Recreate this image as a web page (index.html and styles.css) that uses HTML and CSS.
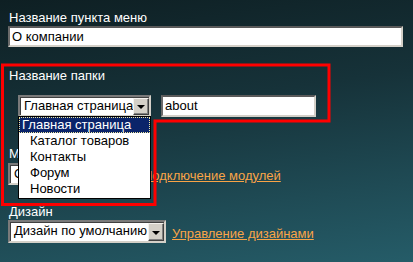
FILE: index.html
```html
<!DOCTYPE html>
<html lang="ru">
<head>
<meta charset="utf-8">
<link rel="stylesheet" href="styles.css">
</head>
<body>
<div class="page">
  <div class="label">Название пункта меню</div>
  <div class="input wide">О компании</div>

  <div class="label folder-label">Название папки</div>
  <div class="row folder-row">
    <div class="select folder-select"><span class="sel-text">Главная страница</span><span class="btn"><span class="tri"></span></span></div>
    <div class="input about">about</div>
  </div>

  <div class="label modules-label">Модули</div>
  <div class="row">
    <div class="select modules-select"><span class="sel-text">О компании</span><span class="btn"><span class="tri"></span></span></div>
    <a class="link modules-link" href="#">Подключение модулей</a>
  </div>

  <div class="label design-label">Дизайн</div>
  <div class="row">
    <div class="select design-select"><span class="sel-text">Дизайн по умолчанию</span><span class="btn"><span class="tri"></span></span></div>
    <a class="link design-link" href="#">Управление дизайнами</a>
  </div>
</div>

<ul class="dropdown">
  <li class="opt first"><span class="focus">Главная страница</span></li>
  <li class="opt">Каталог товаров</li>
  <li class="opt">Контакты</li>
  <li class="opt">Форум</li>
  <li class="opt">Новости</li>
</ul>

<svg class="outline" width="413" height="262" viewBox="0 0 413 262">
  <polygon points="2.5,65 329,65 329,121 155,121 155,204.5 2.5,204.5" fill="none" stroke="#ff0000" stroke-width="3"/>
</svg>
</body>
</html>
```
FILE: styles.css
```css
html, body {
  margin: 0;
  padding: 0;
}
body {
  width: 413px;
  height: 262px;
  overflow: hidden;
  position: relative;
  background: linear-gradient(172deg, #0e1f23 0%, #163239 40%, #1f4b55 75%, #255c68 100%);
  font-family: "Liberation Sans", Arial, sans-serif;
  font-size: 13px;
  color: #ffffff;
}
.page {
  padding: 10px 0 0 8px;
}
.label {
  height: 16px;
  line-height: 16px;
  padding-left: 1px;
}
.input {
  box-sizing: border-box;
  height: 21px;
  background: #fff;
  color: #000;
  border-style: solid;
  border-width: 2px 2px 2px 2px;
  border-color: #5a5a5a #d4d0c8 #d4d0c8 #6a6a6a;
  padding: 0 0 0 2px;
  line-height: 17px;
  font-size: 13px;
}
.wide {
  width: 395px;
}
.folder-label {
  margin-top: 21px;
}
.row {
  display: flex;
  align-items: center;
}
.folder-row {
  margin-top: 11px;
  margin-left: 10px;
}
.select {
  box-sizing: border-box;
  height: 22px;
  display: flex;
  align-items: stretch;
  background: #fff;
  color: #000;
  border-style: solid;
  border-width: 2px;
  border-color: #7a7a7a #d4d0c8 #d4d0c8 #7a7a7a;
  box-shadow: inset 1px 1px 0 #404040;
}
.sel-text {
  flex: 1;
  padding-left: 4px;
  line-height: 17px;
  white-space: nowrap;
  overflow: hidden;
}
.btn {
  box-sizing: border-box;
  width: 16px;
  margin: 1px 0 0 0;
  background: #d4d0c8;
  border-style: solid;
  border-width: 1px;
  border-color: #f4f2ee #404040 #404040 #f4f2ee;
  box-shadow: inset -1px -1px 0 #808080;
  display: flex;
  align-items: center;
  justify-content: center;
}
.tri {
  width: 0;
  height: 0;
  border-left: 4px solid transparent;
  border-right: 4px solid transparent;
  border-top: 4px solid #000;
  margin-top: 1px;
}
.folder-select {
  width: 133px;
}
.about {
  width: 155px;
  margin-left: 10px;
  height: 22px;
}
.modules-label {
  margin-top: 29px;
}
.modules-select {
  width: 128px;
  margin-top: 1px;
}
.modules-link {
  margin-left: 7px;
}
.design-label {
  margin-top: 19px;
}
.design-select {
  width: 158px;
  height: 23px;
}
.design-link {
  margin-left: 6px;
}
.link {
  color: #f9a447;
  text-decoration: underline;
  line-height: 16px;
  margin-top: 5px;
  white-space: nowrap;
}
.dropdown {
  position: absolute;
  left: 18px;
  top: 116px;
  width: 133px;
  box-sizing: border-box;
  margin: 0;
  padding: 0 0 1px 0;
  list-style: none;
  background: #fff;
  border: 1px solid #000;
  color: #000;
}
.opt {
  height: 16px;
  line-height: 16px;
  padding-left: 11px;
  white-space: nowrap;
}
.opt.first {
  padding: 0;
  background: #0a246a;
  color: #fff;
}
.focus {
  display: block;
  box-sizing: border-box;
  height: 16px;
  line-height: 14px;
  padding-left: 2px;
  border: 1px dotted #f0e8a0;
}
.outline {
  position: absolute;
  left: 0;
  top: 0;
  pointer-events: none;
}
```
